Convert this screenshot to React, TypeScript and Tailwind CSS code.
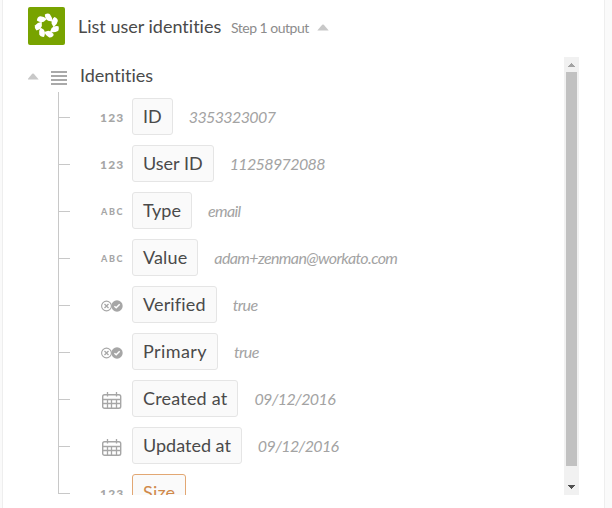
type Kind = 'number' | 'string' | 'boolean' | 'date';

interface Field {
  label: string;
  kind: Kind;
  value?: string;
  highlight?: boolean;
  spacing?: string;
}

const fields: Field[] = [
  { label: 'ID', kind: 'number', value: '3353323007' },
  { label: 'User ID', kind: 'number', value: '11258972088' },
  { label: 'Type', kind: 'string', value: 'email' },
  { label: 'Value', kind: 'string', value: 'adam+zenman@workato.com', spacing: 'tracking-[0.15px]' },
  { label: 'Verified', kind: 'boolean', value: 'true', spacing: 'tracking-[0.15px]' },
  { label: 'Primary', kind: 'boolean', value: 'true', spacing: 'tracking-[0.4px]' },
  { label: 'Created at', kind: 'date', value: '09/12/2016', spacing: 'tracking-[0.2px]' },
  { label: 'Updated at', kind: 'date', value: '09/12/2016' },
  { label: 'Size', kind: 'number', highlight: true, spacing: 'tracking-[0.2px]' },
];

function AppLogo() {
  return (
    <div className="h-[38px] w-[37px] shrink-0 rounded-[2px] bg-[#78a300]">
      <svg width="37" height="38" viewBox="0 0 37 38" fill="#fff">
        {[0, 51.4, 102.8, 154.3, 205.7, 257.1, 308.6].map((angle) => (
          <path
            key={angle}
            transform={`rotate(${angle + 14} 19 18.8)`}
            d="M14.2 8.4Q16.8 5.8 19.2 7Q22.2 9 23 13.4L18.8 13.7Q15.2 12.4 14.2 8.4Z"
          />
        ))}
      </svg>
    </div>
  );
}

function Caret({ className }: { className: string }) {
  return (
    <svg className={className} width="12" height="7" viewBox="0 0 12 7" fill="#c8c8c8">
      <path d="M0.3 6.5L5.2 0.8Q6 0 6.8 0.8L11.7 6.5Z" />
    </svg>
  );
}

function BooleanIcon() {
  return (
    <svg width="22" height="12" viewBox="0 0 22 12" fill="none">
      <circle cx="5.5" cy="6" r="4.9" stroke="#a6a6a6" strokeWidth="1.1" />
      <path d="M3.5 4L7.5 8M7.5 4L3.5 8" stroke="#a6a6a6" strokeWidth="1.3" />
      <circle cx="16" cy="6" r="5.7" fill="#a6a6a6" />
      <path d="M13.4 6.2L15.2 7.8L18.7 4.3" stroke="#fff" strokeWidth="1.5" />
    </svg>
  );
}

function CalendarIcon() {
  return (
    <svg className="ml-px" width="20" height="17" viewBox="0 0 20 17" fill="none" stroke="#a6a6a6">
      <rect x="0.7" y="2.7" width="18" height="13.6" rx="1.8" strokeWidth="1.4" />
      <path d="M1 7.5H18.5M1 11.5H18.5M5.5 7.5V16M9.5 7.5V16M14.5 7.5V16" strokeWidth="1.3" />
      <path d="M5.5 0V4.5M14.5 0V4.5" strokeWidth="1.3" />
    </svg>
  );
}

function KindIcon({ kind }: { kind: Kind }) {
  if (kind === 'boolean') return <BooleanIcon />;
  if (kind === 'date') return <CalendarIcon />;
  if (kind === 'number')
    return <span className="-ml-px text-[12px] leading-3 font-black tracking-[1.2px] text-[#a6a6a6]">123</span>;
  return <span className="text-[9px] leading-3 font-black tracking-[1.6px] text-[#a6a6a6]">ABC</span>;
}

function FieldRow({ field }: { field: Field }) {
  return (
    <li className="flex h-[37px] shrink-0 items-center">
      <div className="mt-[19px] h-px w-[11px] self-start bg-[#c8c8c8]" />
      <div className="ml-[31px] flex h-full w-[31px] items-center pt-[3px]">
        <KindIcon kind={field.kind} />
      </div>
      <div
        className={
          field.highlight
            ? 'h-[37px] rounded-[3px] border border-[#e2a773] bg-[#fafafa] px-[10px] text-lg leading-[35px] text-[#d0894b]'
            : 'h-[37px] rounded-[3px] border border-[#e5e5e5] bg-[#fafafa] px-[10px] text-lg leading-[35px] text-[#4a4a4a]'
        }
      >
        <span className={field.spacing}>{field.label}</span>
      </div>
      {field.value && (
        <span className="ml-4 text-base leading-[35px] tracking-[-0.62px] text-[#a3a3a3] italic">{field.value}</span>
      )}
    </li>
  );
}

export default function App() {
  return (
    <div className="flex h-[508px] w-[612px] overflow-hidden bg-[#fafafa] pl-[2px] font-['Lato',sans-serif] whitespace-nowrap [font-variant-ligatures:none]">
      <main className="h-full w-[603px] border-x border-[#eeeeee] bg-white pl-[25px]">
        <header className="flex h-[57px] items-start pt-[7px]">
          <AppLogo />
          <h1 className="ml-[13px] w-[153px] text-lg leading-[38px] text-[#4a4a4a]">List user identities</h1>
          <span className="w-[78px] text-sm leading-[41px] tracking-[-0.5px] text-[#8c8c8c]">Step 1 output</span>
          <Caret className="mt-[17px] ml-[8px]" />
        </header>
        <div className="flex h-[438px] overflow-hidden">
          <section className="w-[536px] overflow-hidden">
            <div className="flex h-[35px] items-center">
              <Caret className="mt-[4px] -ml-px" />
              <div className="mt-[6px] ml-3 flex w-4 flex-col gap-[2px]">
                <div className="h-[2px] bg-[#a9a9a9]" />
                <div className="h-[2px] bg-[#a9a9a9]" />
                <div className="h-[2px] bg-[#a9a9a9]" />
                <div className="h-[2px] bg-[#a9a9a9]" />
              </div>
              <h2 className="mt-px ml-[13px] text-lg leading-[30px] text-[#4a4a4a]">Identities</h2>
            </div>
            <div className="ml-[30px] flex">
              <div className="h-[402px] w-px bg-[#c8c8c8]" />
              <ul className="flex h-[403px] flex-col gap-[10px] pt-[6px]">
                {fields.map((field) => (
                  <FieldRow key={field.label} field={field} />
                ))}
              </ul>
            </div>
          </section>
          <div className="flex w-[15px] flex-col items-center bg-[#f1f1f1]">
            <svg width="15" height="15" viewBox="0 0 15 15" fill="#a3a3a3" shapeRendering="crispEdges">
              <path d="M4 10V9H5V8H6V7H7V6H8V7H9V8H10V9H11V10Z" />
            </svg>
            <div className="h-[394px] w-[11px] bg-[#c1c1c1]" />
            <svg className="mt-[14px]" width="15" height="15" viewBox="0 0 15 15" fill="#505050" shapeRendering="crispEdges">
              <path d="M4 5H11V6H10V7H9V8H8V9H7V8H6V7H5V6H4Z" />
            </svg>
          </div>
        </div>
      </main>
    </div>
  );
}
